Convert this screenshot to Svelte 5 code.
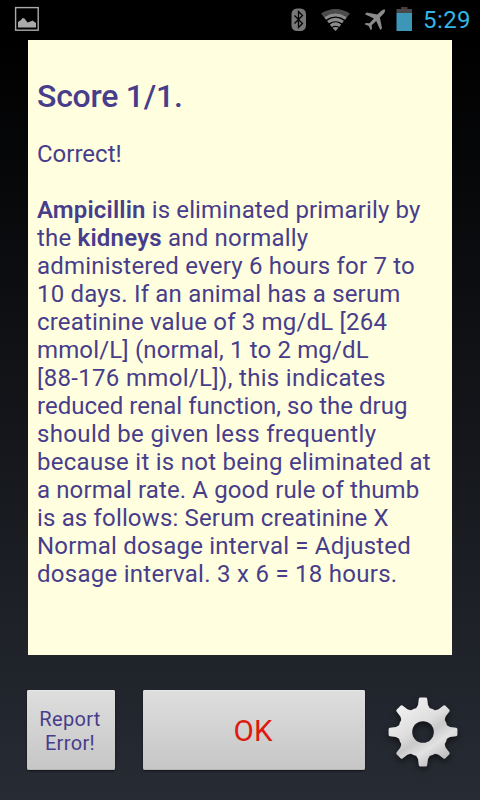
<script lang="ts">
  const title = 'Score 1/1.';
  const verdict = 'Correct!';
  const teeth = [0, 45, 90, 135, 180, 225, 270, 315];

  // tracking is in px, it evens out the right edge of each line
  const lines = [
    { html: '<b>Ampicillin</b> is eliminated primarily by', tracking: 0.14 },
    { html: 'the <b>kidneys</b> and normally', tracking: 0.2 },
    { html: 'administered every 6 hours for 7 to', tracking: 0.2 },
    { html: '10 days. If an animal has a serum', tracking: 0.18 },
    { html: 'creatinine value of 3 mg/dL [264', tracking: 0.18 },
    { html: 'mmol/L] (normal, 1 to 2 mg/dL', tracking: 0.14 },
    { html: '[88-176 mmol/L]), this indicates', tracking: 0.32 },
    { html: 'reduced renal function, so the drug', tracking: 0.02 },
    { html: 'should be given less frequently', tracking: 0.34 },
    { html: 'because it is not being eliminated at', tracking: 0.27 },
    { html: 'a normal rate. A good rule of thumb', tracking: 0.12 },
    { html: 'is as follows: Serum creatinine X', tracking: 0.16 },
    { html: 'Normal dosage interval = Adjusted', tracking: 0.19 },
    { html: 'dosage interval. 3 x 6 = 18 hours.', tracking: 0.27 },
  ];
</script>

<div class="screen">
  <header class="statusbar">
    <svg class="picture" width="26" height="26" viewBox="0 0 26 26">
      <rect x="1.6" y="1.6" width="22.6" height="22.6" fill="none" stroke="#aaa" stroke-width="1.4" />
      <path d="M4 21.500v-5.500l3-2 1.500-2 2 .5 3 4 3-1 2-1 2 1.500 1.500 1v4.500z" fill="#aaa" />
    </svg>

    <div class="status">
      <svg class="bluetooth" width="16" height="24" viewBox="0 0 16 24">
        <rect x="0.5" y="0.5" width="14.5" height="22.5" rx="5.5" fill="#777" />
        <path d="M3.5 7.5l8 8-4 4v-16l4 4-8 8" fill="none" stroke="#000" stroke-width="1.3" />
      </svg>
      <svg class="wifi" width="32" height="24" viewBox="0 0 32 24">
        <path d="M1 5.5Q15.5-3.500 30 5.5L27 9.3Q15.5 1.8 4 9.3z" fill="#4c4c4c" />
        <g fill="none" stroke="#8c8c8c" stroke-width="3.2">
          <path d="M5 10.3Q15.5 3.6 26 10.3" />
          <path d="M8 14Q15.5 9 23 14" />
          <path d="M10.8 17.7Q15.5 14.3 20.2 17.7" />
        </g>
        <path d="M12.3 19.8Q15.5 18 18.7 19.8L15.5 23z" fill="#8c8c8c" />
      </svg>
      <svg class="plane" width="22" height="22" viewBox="0 0 22 22">
        <path
          d="M20.800.6Q19.200-.2 17 2L13.300 5.600 2.700 3.500.9 5.200 10 9.500 5.500 14.300 1.800 14 .6 15.200 4.700 17 6.700 21 8 19.900 7.700 16.300 12.200 11.900 16.300 21 18 19.300 15.900 8.500 19.600 4.700Q21.800 2 20.800.6z"
          fill="#8b8b8b"
        />
      </svg>
      <svg class="battery" width="17" height="24" viewBox="0 0 17 24">
        <rect x="5" y="0" width="6.5" height="3" fill="#4c3838" />
        <rect x="0.5" y="2" width="15.5" height="4" fill="#494949" />
        <rect x="0.5" y="6" width="15.5" height="18" fill="#3b96b7" />
      </svg>
      <span class="clock">5:29</span>
    </div>
  </header>

  <main class="result">
    <h1>{title}</h1>
    <p>{verdict}</p>
    <p class="explanation">
      {#each lines as line}
        <span style:letter-spacing="{line.tracking}px">{@html line.html}</span>
      {/each}
    </p>
  </main>

  <footer class="actions">
    <button class="report">Report<br />Error!</button>
    <button class="ok">OK</button>
    <button class="settings" aria-label="Settings">
      <svg width="76" height="76" viewBox="-38 -38 76 76">
        <defs>
          <linearGradient id="metal" gradientUnits="userSpaceOnUse" x1="-22" y1="-30" x2="20" y2="32">
            <stop offset="0" stop-color="#f2f2f2" />
            <stop offset="0.4" stop-color="#dedede" />
            <stop offset="0.55" stop-color="#c9c9c9" />
            <stop offset="0.72" stop-color="#e2e2e2" />
            <stop offset="1" stop-color="#b4b4b4" />
          </linearGradient>
          <mask id="cog">
            <circle r="25" fill="#fff" />
            {#each teeth as angle}
              <path
                d="M-7-23.500L-5-27-4.200-33.200Q-4-34.200-3-34.400H3Q4-34.200 4.200-33.200L5-27 7-23.500z"
                fill="#fff"
                transform="rotate({angle})"
              />
            {/each}
            <circle r="10.8" fill="#000" />
          </mask>
        </defs>
        <rect x="-38" y="-38" width="76" height="76" fill="url(#metal)" mask="url(#cog)" />
      </svg>
    </button>
  </footer>
</div>

<style>
  :global(body) {
    margin: 0;
    background: #000;
  }

  .screen {
    width: 480px;
    height: 800px;
    display: flex;
    flex-direction: column;
    overflow: hidden;
    background: linear-gradient(#000 40px, #272b34 800px);
    font-family: Roboto, 'Liberation Sans', sans-serif;
    color: #483d8b;
  }

  .statusbar {
    height: 40px;
    flex-shrink: 0;
    box-sizing: border-box;
    padding: 0 9px 0 14px;
    display: flex;
    align-items: center;
    justify-content: space-between;
    background: #000;
  }

  .picture {
    margin-bottom: 2px;
  }

  .status {
    display: flex;
    align-items: center;
  }

  .wifi {
    margin-left: 13px;
  }

  .plane {
    margin-left: 12px;
  }

  .battery {
    margin: 0 10px 3px;
  }

  .clock {
    font-size: 24px;
    line-height: 40px;
    letter-spacing: 0.4px;
    color: #33b5e5;
  }

  .result {
    width: 424px;
    height: 615px;
    flex-shrink: 0;
    box-sizing: border-box;
    margin: 0 28px;
    padding: 37px 9px 0;
    background: #ffffdf;
    font-size: 24px;
    line-height: 28px;
    white-space: nowrap;
  }

  h1 {
    margin: 0 0 25px;
    font-size: 32px;
    line-height: 38px;
    font-weight: 500;
    letter-spacing: -0.25px;
  }

  p {
    margin: 0 0 28px;
  }

  .explanation span {
    display: block;
  }

  .explanation :global(b) {
    font-weight: 600;
  }

  .actions {
    display: flex;
    align-items: center;
    padding: 35px 0 0 27px;
  }

  button {
    padding: 0;
    border: none;
    font-family: inherit;
    color: inherit;
    background: none;
  }

  .report,
  .ok {
    height: 80px;
    border-radius: 2px;
    background: linear-gradient(#dedede, #c6c6c6);
    box-shadow: inset 0 1px #e6e6e6, inset 0 -1px #b5b5b5, 0 1px 2px #0009;
  }

  .report {
    width: 88px;
    padding: 2px 2px 0 0;
    font-size: 20px;
    line-height: 24px;
    letter-spacing: 0.35px;
  }

  .ok {
    width: 222px;
    margin-left: 28px;
    padding: 2px 2px 0 0;
    font-size: 29.5px;
    color: #dd1a0d;
  }

  .settings {
    height: 76px;
    margin: 3px 0 0 20px;
  }

  .settings svg {
    display: block;
    filter: drop-shadow(0 3px 3px #0008);
  }
</style>
